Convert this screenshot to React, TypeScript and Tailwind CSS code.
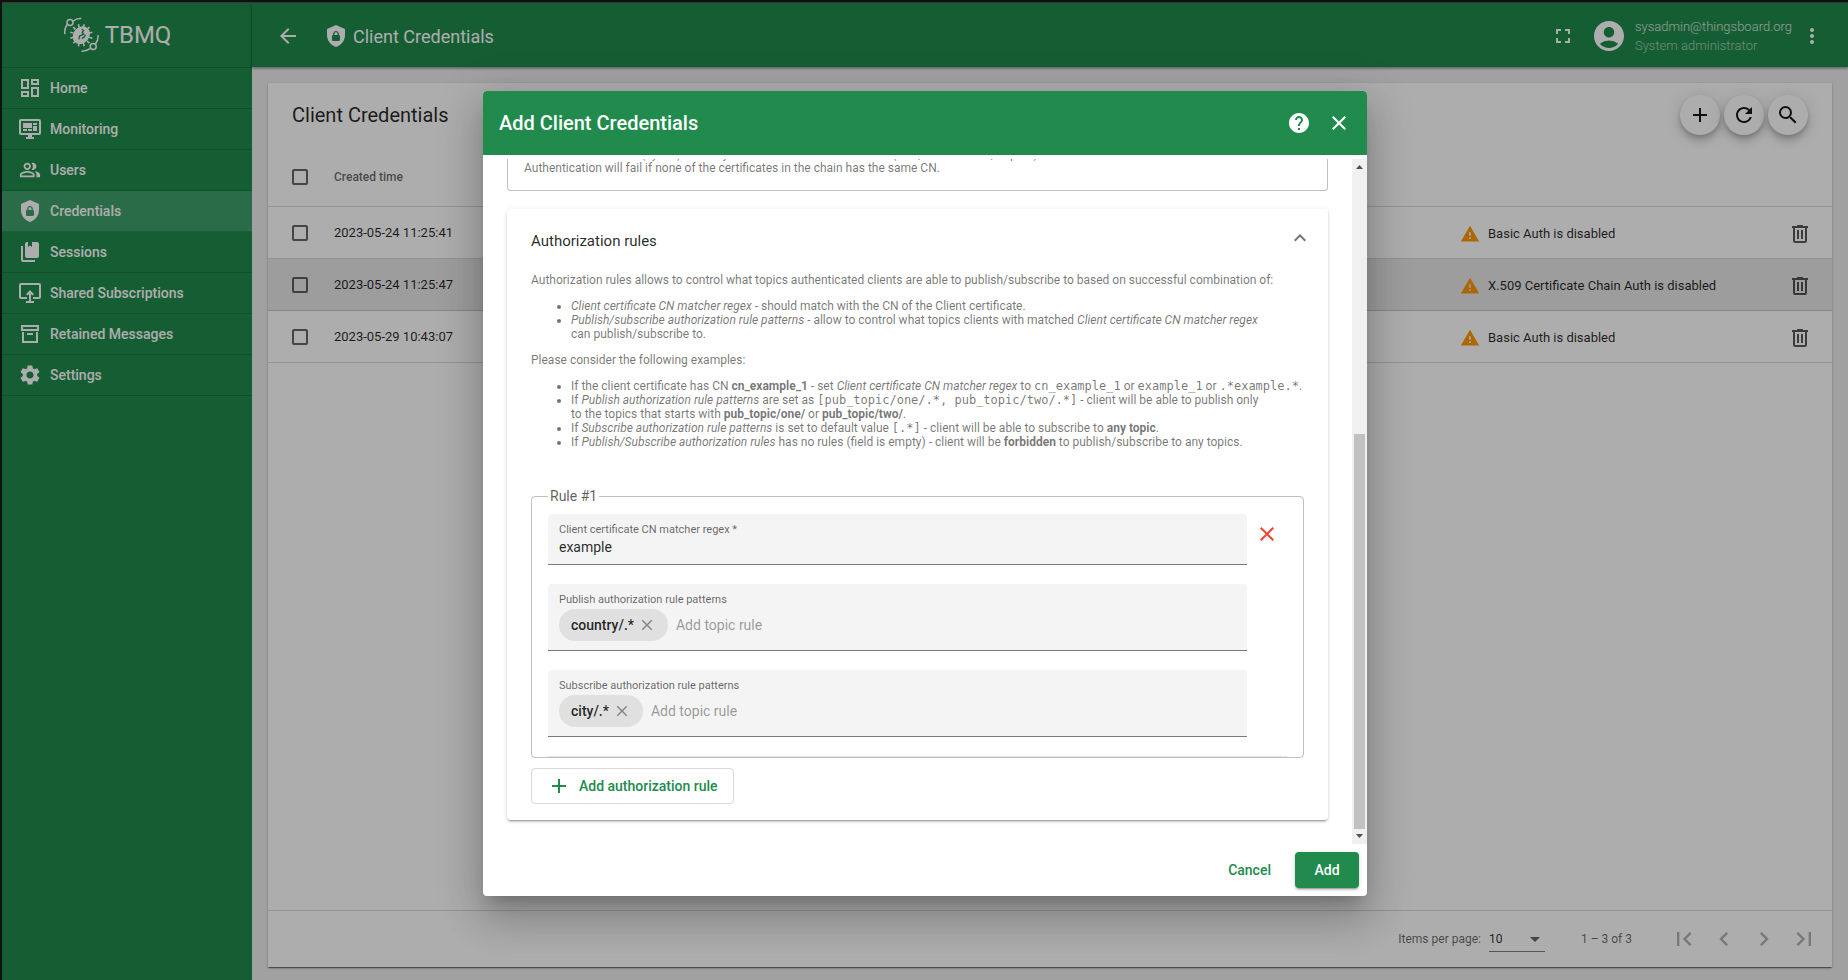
import React from 'react';
import {
  MdAccountCircle,
  MdAdd,
  MdArrowBack,
  MdArrowDropDown,
  MdChevronLeft,
  MdChevronRight,
  MdClose,
  MdExpandLess,
  MdFirstPage,
  MdFullscreen,
  MdHelp,
  MdLastPage,
  MdMoreVert,
  MdOutlineDashboard,
  MdOutlinePeopleAlt,
  MdRefresh,
  MdSearch,
  MdSettings,
  MdWarning,
} from 'react-icons/md';

const paths = {
  monitor:
    'M21,16V4H3V16H21M21,2A2,2 0 0,1 23,4V16A2,2 0 0,1 21,18H14V20H16V22H8V20H10V18H3C1.89,18 1,17.1 1,16V4C1,2.89 1.89,2 3,2H21M5,6H14V11H5V6M15,6H19V8H15V6M19,9V14H15V9H19M5,12H9V14H5V12M10,12H14V14H10V12Z',
  shieldLock:
    'M12,1L3,5V11C3,16.55 6.84,21.74 12,23C17.16,21.74 21,16.55 21,11V5L12,1M12,7C13.4,7 14.8,8.1 14.8,9.5V11C15.4,11 16,11.6 16,12.3V15.8C16,16.4 15.4,17 14.7,17H9.2C8.6,17 8,16.4 8,15.7V12.2C8,11.6 8.6,11 9.2,11V9.5C9.2,8.1 10.6,7 12,7M12,8.2C11.2,8.2 10.5,8.7 10.5,9.5V11H13.5V9.5C13.5,8.7 12.8,8.2 12,8.2Z',
  books:
    'M19 18H9A2 2 0 0 1 7 16V4A2 2 0 0 1 9 2H10V7L12 5.5L14 7V2H19A2 2 0 0 1 21 4V16A2 2 0 0 1 19 18M17 20V22H5A2 2 0 0 1 3 20V6H5V20H17Z',
  share:
    'M21,2H3A2,2 0 0,0 1,4V16A2,2 0 0,0 3,18H9V16H3V4H21V16H15V18H21A2,2 0 0,0 23,16V4A2,2 0 0,0 21,2M11,20V13.2L9.2,14.6L8,13.3L12,9L16,13.3L14.8,14.6L13,13.2V20H16V22H8V20Z',
  archive:
    'M20 21H4V10H6V19H18V10H20V21M3 3H21V9H3V3M9.5 11H14.5C14.78 11 15 11.22 15 11.5V13H9V11.5C9 11.22 9.22 11 9.5 11M5 5V7H19V5H5Z',
  trash:
    'M9,3V4H4V6H5V19A2,2 0 0,0 7,21H17A2,2 0 0,0 19,19V6H20V4H15V3H9M7,6H17V19H7V6M9,8V17H11V8H9M13,8V17H15V8H13Z',
};

function Icon({ d }: { d: string }) {
  return (
    <svg viewBox="0 0 24 24" className="size-6 shrink-0" fill="currentColor" aria-hidden="true">
      <path d={d} fillRule="evenodd" />
    </svg>
  );
}

function Logo() {
  const spikes = [15, 45, 75, 105, 135, 165, 195, 225, 255, 285, 315, 345];
  return (
    <svg viewBox="0 0 36 36" className="size-9" fill="none" stroke="currentColor" strokeWidth="1.5" aria-hidden="true">
      <circle cx="7" cy="5.6" r="3" />
      <path d="M10 4.2C12.5 2 15 1.4 18.2 1.6M4.2 7.5C2 10.5 1.4 13.5 1.8 17.2" />
      <circle cx="30.2" cy="29.6" r="3" />
      <path d="M27 31.6C24 33.8 22 34.4 18.6 34.2M32.4 27C34.6 24 35.4 21 35 18" />
      {spikes.map((a) => (
        <path key={a} d="M18.3 10V6.8" strokeWidth="1.6" transform={`rotate(${a} 18.3 18.2)`} />
      ))}
      <ellipse cx="18.3" cy="18.2" rx="9.4" ry="8" transform="rotate(-50 18.3 18.2)" fill="currentColor" stroke="none" />
      <path
        d="M18.8 12.2L20.6 13.4L19.2 15.4L20.8 17.2L16.6 19L15.8 22.4M22.6 17.8L20.8 20.4L18.8 21.4"
        stroke="#208b4d"
        strokeWidth="1.3"
      />
    </svg>
  );
}

const nav = [
  { label: 'Home', icon: <MdOutlineDashboard className="size-6" /> },
  { label: 'Monitoring', icon: <Icon d={paths.monitor} /> },
  { label: 'Users', icon: <MdOutlinePeopleAlt className="mx-px size-[22px]" /> },
  { label: 'Credentials', icon: <Icon d={paths.shieldLock} />, active: true },
  { label: 'Sessions', icon: <Icon d={paths.books} /> },
  { label: 'Shared Subscriptions', icon: <Icon d={paths.share} /> },
  { label: 'Retained Messages', icon: <Icon d={paths.archive} /> },
  { label: 'Settings', icon: <MdSettings className="size-6" /> },
];

const rows = [
  { time: '2023-05-24 11:25:41', status: 'Basic Auth is disabled' },
  { time: '2023-05-24 11:25:47', status: 'X.509 Certificate Chain Auth is disabled', hover: true },
  { time: '2023-05-29 10:43:07', status: 'Basic Auth is disabled' },
];

function Sidebar() {
  return (
    <aside className="flex w-[250px] shrink-0 flex-col bg-[#208b4d] text-white">
      <div className="flex h-16 items-center justify-center gap-1.5 pr-5">
        <Logo />
        <span className="text-[24px] leading-8">TBMQ</span>
      </div>
      <nav className="border-t border-black/15">
        {nav.map((n) => (
          <a
            key={n.label}
            href="#"
            className={
              'flex h-[41px] items-center gap-2 border-b border-black/15 px-4 text-[14px] font-medium ' +
              (n.active ? 'bg-[#3f9f6b]' : '')
            }
          >
            {n.icon}
            {n.label}
          </a>
        ))}
      </nav>
    </aside>
  );
}

function TopBar() {
  return (
    <header className="z-10 flex h-16 shrink-0 items-center bg-[#208b4d] px-6 pt-0.5 text-white shadow-[0_1px_3px_rgba(0,0,0,0.5)]">
      <button aria-label="Back" className="mr-6">
        <MdArrowBack className="size-6" />
      </button>
      <h1 className="flex flex-1 items-center gap-[5px] text-[18px]">
        <Icon d={paths.shieldLock} />
        Client Credentials
      </h1>
      <button aria-label="Fullscreen" className="mr-4">
        <MdFullscreen className="size-6" />
      </button>
      <MdAccountCircle className="mr-2 size-9" />
      <div className="mr-2 text-[13px] leading-[19px] font-light">
        <div className="text-white/80">sysadmin@thingsboard.org</div>
        <div className="text-white/60">System administrator</div>
      </div>
      <button aria-label="Menu">
        <MdMoreVert className="size-6" />
      </button>
    </header>
  );
}

const check = 'block size-4 appearance-none rounded-[2px] border-2 border-black/60';
const fab =
  'flex size-10 items-center justify-center rounded-full bg-white text-black/90 shadow-[0_3px_5px_-1px_rgba(0,0,0,0.2),0_6px_10px_rgba(0,0,0,0.14),0_1px_18px_rgba(0,0,0,0.12)]';

function TableCard() {
  return (
    <section className="flex flex-1 flex-col bg-white text-black/85 shadow-[0_2px_1px_-1px_rgba(0,0,0,0.3),0_1px_1px_rgba(0,0,0,0.2),0_1px_3px_rgba(0,0,0,0.2)]">
      <div className="flex h-16 items-center gap-1 px-6">
        <h2 className="flex-1 text-[20px]">Client Credentials</h2>
        <button aria-label="Add" className={fab}>
          <MdAdd className="size-6" />
        </button>
        <button aria-label="Refresh" className={fab}>
          <MdRefresh className="size-6" />
        </button>
        <button aria-label="Search" className={fab}>
          <MdSearch className="size-6" />
        </button>
      </div>
      <table className="w-full table-fixed border-separate border-spacing-0 text-left text-[13px]">
        <colgroup>
          <col className="w-[66px]" />
          <col />
          <col className="w-[312px]" />
          <col className="w-[60px]" />
        </colgroup>
        <thead>
          <tr className="h-[60px] text-[12px] text-black/60">
            <th className="border-b border-black/15 pl-6">
              <input type="checkbox" aria-label="Select all" className={check} />
            </th>
            <th className="border-b border-black/15 font-medium">Created time</th>
            <th className="border-b border-black/15" />
            <th className="border-b border-black/15" />
          </tr>
        </thead>
        <tbody>
          {rows.map((r) => (
            <tr key={r.time} className={'h-[52px] ' + (r.hover ? 'bg-[#e8e8e8]' : '')}>
              <td className="border-b border-black/15 pl-6">
                <input type="checkbox" aria-label={'Select ' + r.time} className={check} />
              </td>
              <td className="border-b border-black/15">{r.time}</td>
              <td className="border-b border-black/15 pt-0.5">
                <div className="flex items-center gap-2">
                  <MdWarning className="size-5 text-[#ff9900]" />
                  {r.status}
                </div>
              </td>
              <td className="border-b border-black/15 pt-0.5">
                <button aria-label="Delete" className="ml-4 block text-black/65">
                  <Icon d={paths.trash} />
                </button>
              </td>
            </tr>
          ))}
        </tbody>
      </table>
      <div className="mt-auto flex h-[57px] items-center border-t border-black/15 pr-2 text-[12px] text-black/60">
        <label htmlFor="page-size" className="mr-2 ml-auto">
          Items per page:
        </label>
        <div className="relative mr-9 w-14 border-b border-black/50">
          <select id="page-size" className="block h-6 w-full appearance-none text-black/85">
            <option>10</option>
          </select>
          <MdArrowDropDown className="pointer-events-none absolute top-0 -right-0.5 size-6" />
        </div>
        <span className="mr-8">1 – 3 of 3</span>
        <div className="flex text-black/30">
          <button aria-label="First page" className="flex size-10 items-center justify-center">
            <MdFirstPage className="size-7" />
          </button>
          <button aria-label="Previous page" className="flex size-10 items-center justify-center">
            <MdChevronLeft className="size-7" />
          </button>
          <button aria-label="Next page" className="flex size-10 items-center justify-center">
            <MdChevronRight className="size-7" />
          </button>
          <button aria-label="Last page" className="flex size-10 items-center justify-center">
            <MdLastPage className="size-7" />
          </button>
        </div>
      </div>
    </section>
  );
}

function Code({ children }: { children: React.ReactNode }) {
  return <code className="font-['DejaVu_Sans_Mono',monospace] text-[12px] leading-none">{children}</code>;
}

function ChipField({ id, label, chip }: { id: string; label: string; chip: string }) {
  return (
    <div className="rounded-t border-b border-black/50 bg-[#f4f4f4] px-[11px] pt-[9px] pb-[9px]">
      <label htmlFor={id} className="block text-[11px] leading-[14px] text-black/60">
        {label}
      </label>
      <div className="mt-0.5 flex items-center gap-2">
        <span className="flex h-8 items-center gap-1 rounded-full bg-[#e0e0e0] px-3 text-[14px] font-medium text-black/85">
          {chip}
          <button aria-label={'Remove ' + chip} className="text-black/40">
            <MdClose className="size-[18px]" />
          </button>
        </span>
        <input
          id={id}
          placeholder="Add topic rule"
          className="min-w-0 flex-1 bg-transparent text-[14px] placeholder:text-black/40"
        />
      </div>
    </div>
  );
}

function AuthorizationPanel() {
  return (
    <section className="mt-[18px] rounded bg-white px-6 pb-4 shadow-[0_3px_1px_-2px_rgba(0,0,0,0.2),0_2px_2px_rgba(0,0,0,0.14),0_1px_5px_rgba(0,0,0,0.12)]">
      <div className="-mr-2 flex h-16 items-center justify-between">
        <h3 className="text-[15px] text-black/85">Authorization rules</h3>
        <button aria-label="Collapse" className="mb-1.5 text-black/55">
          <MdExpandLess className="size-6" />
        </button>
      </div>
      <div className="space-y-3 text-[12px] leading-[14px] text-black/55">
        <p>
          Authorization rules allows to control what topics authenticated clients are able to publish/subscribe to based
          on successful combination of:
        </p>
        <ul className="list-disc pl-10">
          <li>
            <i>Client certificate CN matcher regex</i> - should match with the CN of the Client certificate.
          </li>
          <li>
            <i>Publish/subscribe authorization rule patterns</i> - allow to control what topics clients with matched{' '}
            <i>Client certificate CN matcher regex</i>
            <br />
            can publish/subscribe to.
          </li>
        </ul>
        <p>Please consider the following examples:</p>
        <ul className="list-disc pl-10 whitespace-nowrap">
          <li>
            If the client certificate has CN <b>cn_example_1</b> - set <i>Client certificate CN matcher regex</i> to{' '}
            <Code>cn_example_1</Code> or <Code>example_1</Code> or <Code>.*example.*</Code>.
          </li>
          <li>
            If <i>Publish authorization rule patterns</i> are set as <Code>[pub_topic/one/.*, pub_topic/two/.*]</Code> -
            client will be able to publish only
            <br />
            to the topics that starts with <b>pub_topic/one/</b> or <b>pub_topic/two/</b>.
          </li>
          <li>
            If <i>Subscribe authorization rule patterns</i> is set to default value <Code>[.*]</Code> - client will be
            able to subscribe to <b>any topic</b>.
          </li>
          <li>
            If <i>Publish/Subscribe authorization rules</i> has no rules (field is empty) - client will be{' '}
            <b>forbidden</b> to publish/subscribe to any topics.
          </li>
        </ul>
      </div>
      <fieldset className="mt-[38px] rounded border border-black/25 px-4">
        <legend className="px-0.5 text-[14px] leading-[18px] text-black/65">Rule #1</legend>
        <div className="flex border-b border-black/10 pt-[9px] pb-[19px]">
          <div className="flex flex-1 flex-col gap-[19px]">
            <div className="rounded-t border-b border-black/50 bg-[#f4f4f4] px-[11px] pt-[9px] pb-[7px]">
              <label htmlFor="cn-regex" className="block text-[11px] leading-[14px] text-black/60">
                Client certificate CN matcher regex *
              </label>
              <input
                id="cn-regex"
                defaultValue="example"
                className="block h-5 w-full bg-transparent text-[14px] text-black/85"
              />
            </div>
            <ChipField id="pub" label="Publish authorization rule patterns" chip="country/.*" />
            <ChipField id="sub" label="Subscribe authorization rule patterns" chip="city/.*" />
          </div>
          <button aria-label="Remove rule" className="flex size-10 items-center justify-center text-[#f44336]">
            <MdClose className="size-6" />
          </button>
        </div>
      </fieldset>
      <button className="mt-2.5 flex h-9 items-center gap-2 rounded border border-black/15 px-[15px] text-[14px] font-medium text-[#208b4d]">
        <MdAdd className="size-6" />
        Add authorization rule
      </button>
    </section>
  );
}

function Dialog() {
  return (
    <div
      role="dialog"
      aria-label="Add Client Credentials"
      className="flex w-[884px] max-w-full flex-col overflow-hidden rounded bg-white shadow-[0_11px_15px_-7px_rgba(0,0,0,0.2),0_24px_38px_3px_rgba(0,0,0,0.14),0_9px_46px_8px_rgba(0,0,0,0.12)]"
    >
      <div className="flex h-16 items-center gap-4 bg-[#208b4d] px-4 text-white">
        <h2 className="flex-1 text-[20px] font-medium">Add Client Credentials</h2>
        <button aria-label="Help">
          <MdHelp className="size-6" />
        </button>
        <button aria-label="Close">
          <MdClose className="size-6" />
        </button>
      </div>
      <div className="mt-1 flex max-h-[685px]">
        <div className="flex flex-1 flex-col justify-end overflow-hidden px-6 pb-6">
          <div className="rounded-b border border-t-0 border-black/25 px-4 pt-1 pb-[15px] text-[12px] leading-[14px] text-black/55">
            The client is matched (by CN) with any of the certificates in the chain (root, intermediate, or peer).
            <br />
            Authentication will fail if none of the certificates in the chain has the same CN.
          </div>
          <AuthorizationPanel />
        </div>
        <div className="flex w-[15px] flex-col items-center bg-[#f0f0f0] text-[#505050]">
          <svg viewBox="0 0 15 15" className="size-[15px]" aria-hidden="true">
            <path d="M4 10L7.5 6L11 10Z" fill="currentColor" />
          </svg>
          <div className="mt-[260px] w-[11px] flex-1 bg-[#c1c1c1]" />
          <svg viewBox="0 0 15 15" className="size-[15px]" aria-hidden="true">
            <path d="M4 5L7.5 9L11 5Z" fill="currentColor" />
          </svg>
        </div>
      </div>
      <div className="flex items-center justify-end gap-2 p-2 text-[14px] font-medium">
        <button className="h-9 rounded px-4 text-[#208b4d]">Cancel</button>
        <button className="h-9 w-16 rounded bg-[#208b4d] text-white shadow-[0_3px_1px_-2px_rgba(0,0,0,0.2),0_2px_2px_rgba(0,0,0,0.14),0_1px_5px_rgba(0,0,0,0.12)]">
          Add
        </button>
      </div>
    </div>
  );
}

export default function App() {
  return (
    <div className="relative flex h-screen flex-col overflow-hidden border-t-2 border-l-2 border-[#111] font-['Roboto',sans-serif]">
      <div className="flex min-h-0 flex-1 border-t border-[#555]">
        <Sidebar />
        <div className="flex min-w-0 flex-1 flex-col bg-[#eeeeee]">
          <TopBar />
          <main className="flex flex-1 flex-col px-4 pt-4 pb-[13px]">
            <TableCard />
          </main>
        </div>
      </div>
      <div className="absolute inset-0 z-20 flex items-start justify-center bg-black/32 pt-[89px]">
        <Dialog />
      </div>
    </div>
  );
}
